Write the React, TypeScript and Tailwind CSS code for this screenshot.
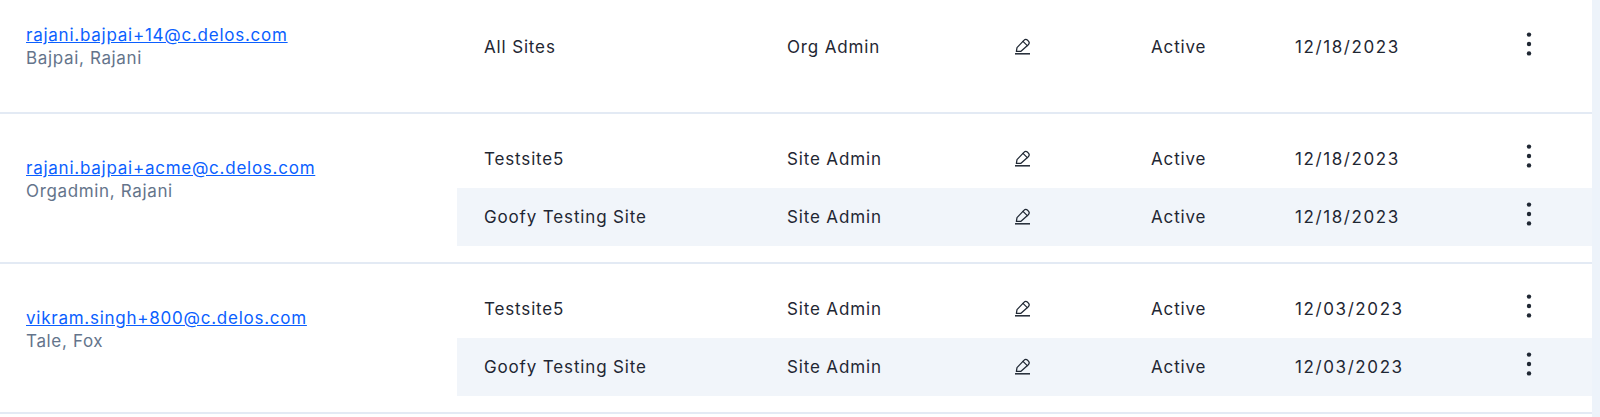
const Pencil = () => (
  <svg width="17" height="20" viewBox="0 0 17 20" fill="none" stroke="#1f2733" strokeWidth="1.25" strokeLinejoin="round" strokeLinecap="round">
    <path d="M2.4 14.4 L3 10.6 L9.9 3.4 C10.9 2.4 12.5 2.3 13.6 3.3 L14.4 4.1 C15.4 5.2 15.3 6.7 14.3 7.7 L7 14.3 Z" />
    <path d="M9 4.4 L13.3 8.6" />
    <path d="M1 16.8 H16" strokeWidth="1.5" strokeLinecap="butt" />
  </svg>
);

const Dots = () => (
  <svg width="6" height="26" viewBox="0 0 6 26" fill="#1f2733">
    <circle cx="3" cy="3.6" r="2.2" />
    <circle cx="3" cy="13" r="2.2" />
    <circle cx="3" cy="22.4" r="2.2" />
  </svg>
);

type Sub = { site: string; role: string; date: string };

const SubRow = ({ s, shaded }: { s: Sub; shaded: boolean }) => (
  <div
    className={`grid h-[58px] grid-cols-[303px_227px_137px_144px_231px_1fr] items-center pl-[27px] text-[17px] tracking-[0.85px] text-[#1f2733] ${
      shaded ? "bg-[#f1f5fa]" : ""
    }`}
  >
    <div className="pt-px">{s.site}</div>
    <div className="pt-px">{s.role}</div>
    <div className="flex"><Pencil /></div>
    <div className="pt-px">Active</div>
    <div className="pt-px tracking-[1.6px]">{s.date}</div>
    <div className="-mt-[7px] flex"><Dots /></div>
  </div>
);

const Row = ({
  email,
  name,
  subs,
  cls,
  infoCls,
}: {
  email: string;
  name: string;
  subs: Sub[];
  cls: string;
  infoCls: string;
}) => (
  <div className={`flex border-b-2 border-[#e3eaf4] ${cls}`}>
    <div className={`w-[457px] shrink-0 pl-[26px] ${infoCls}`}>
      <a href="#" className="block text-[17px] leading-[24px] tracking-[0.75px] text-[#0b5fff] underline">
        {email}
      </a>
      <div className="-mt-px text-[17px] leading-[24px] tracking-[0.65px] text-[#64748b]">{name}</div>
    </div>
    <div className="flex-1">
      {subs.map((s, i) => (
        <SubRow key={i} s={s} shaded={i % 2 === 1} />
      ))}
    </div>
  </div>
);

export default function App() {
  return (
    <div className="flex h-[417px] overflow-hidden bg-white font-['Inter',sans-serif]">
      <div className="w-[1592px] shrink-0">
        <Row
          email="rajani.bajpai+14@c.delos.com"
          name="Bajpai, Rajani"
          cls="pt-[18px] pb-[36px]"
          infoCls="pt-[5px]"
          subs={[{ site: "All Sites", role: "Org Admin", date: "12/18/2023" }]}
        />
        <Row
          email="rajani.bajpai+acme@c.delos.com"
          name="Orgadmin, Rajani"
          cls="pt-[16px] pb-[16px]"
          infoCls="pt-[26px]"
          subs={[
            { site: "Testsite5", role: "Site Admin", date: "12/18/2023" },
            { site: "Goofy Testing Site", role: "Site Admin", date: "12/18/2023" },
          ]}
        />
        <Row
          email="vikram.singh+800@c.delos.com"
          name="Tale, Fox"
          cls="pt-[16px] pb-[16px]"
          infoCls="pt-[26px]"
          subs={[
            { site: "Testsite5", role: "Site Admin", date: "12/03/2023" },
            { site: "Goofy Testing Site", role: "Site Admin", date: "12/03/2023" },
          ]}
        />
      </div>
      <div className="flex-1 bg-[#edf3fa]" />
    </div>
  );
}
